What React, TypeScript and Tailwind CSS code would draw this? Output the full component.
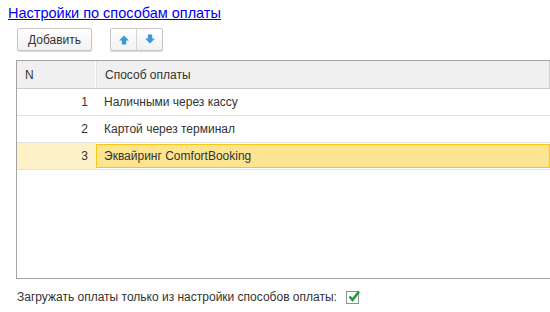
import React from 'react';

const rows = [
  { n: 1, name: 'Наличными через кассу' },
  { n: 2, name: 'Картой через терминал' },
  { n: 3, name: 'Эквайринг ComfortBooking', selected: true },
];

const ArrowUp = () => (
  <svg width="10" height="10" viewBox="0 0 10 10">
    <path d="M5 0.5 L10 5.5 L7.2 5.5 L7.2 9.5 L2.8 9.5 L2.8 5.5 L0 5.5 Z" fill="#3b99d8" />
  </svg>
);

const ArrowDown = () => (
  <svg width="10" height="10" viewBox="0 0 10 10">
    <path d="M5 9.5 L10 4.5 L7.2 4.5 L7.2 0.5 L2.8 0.5 L2.8 4.5 L0 4.5 Z" fill="#3b99d8" />
  </svg>
);

const App = () => {
  return (
    <div className="w-[550px] h-[312px] bg-white overflow-hidden flex flex-col font-['Liberation_Sans',Arial,sans-serif] text-[12px] text-[#333333]">
      {/* Title */}
      <div className="pl-[8px] pt-[5px] leading-[17px]">
        <a href="#" className="text-[14.5px] text-[#0000ee] underline">
          Настройки по способам оплаты
        </a>
      </div>

      {/* Toolbar */}
      <div className="flex items-center pl-[17px] mt-[5px] gap-[18px]">
        <button className="h-[23px] w-[75px] rounded-[2px] border border-[#c6c6c6] bg-gradient-to-b from-white to-[#f1f1f1] shadow-[0_1px_1px_rgba(0,0,0,0.15)] text-[12px] text-[#333333]">
          Добавить
        </button>
        <div className="flex h-[23px] rounded-[2px] border border-[#c6c6c6] bg-gradient-to-b from-white to-[#f1f1f1] shadow-[0_1px_1px_rgba(0,0,0,0.15)]">
          <div className="w-[26px] flex items-center justify-center border-r border-[#d4d4d4]">
            <ArrowUp />
          </div>
          <div className="w-[25px] flex items-center justify-center">
            <div className="-mt-[2px]">
              <ArrowDown />
            </div>
          </div>
        </div>
      </div>

      {/* Table */}
      <div className="ml-[16px] mt-[9px] h-[219px] border-t border-l border-b border-[#a3a3a3] flex flex-col">
        <div className="flex h-[28px] bg-[#f0f0f0] border-b border-[#cccccc] border-r">
          <div className="w-[79px] flex items-center pl-[8px] border-r border-white">N</div>
          <div className="flex-1 flex items-center pl-[8px] border-l border-[#e2e2e2]">Способ оплаты</div>
        </div>
        {rows.map((r) => (
          <div key={r.n} className="flex h-[27px] border-b border-[#e3e3e3]">
            <div
              className={
                r.selected
                  ? 'w-[79px] flex items-center justify-end pr-[8px] bg-[#fdf1c7]'
                  : 'w-[79px] flex items-center justify-end pr-[8px]'
              }
            >
              {r.n}
            </div>
            <div
              className={
                r.selected
                  ? 'flex-1 flex items-center pl-[7px] my-[1px] bg-[#fde490] border border-[#f5c717]'
                  : 'flex-1 flex items-center pl-[8px]'
              }
            >
              {r.name}
            </div>
          </div>
        ))}
      </div>

      {/* Option */}
      <div className="flex items-center pl-[17px] mt-[9px]">
        <span>Загружать оплаты только из настройки способов оплаты:</span>
        <div className="relative ml-[9px] w-[13px] h-[13px] border border-[#8f8f8f] bg-white">
          <svg width="14" height="14" viewBox="0 0 14 14" className="absolute left-[0px] top-[-3px]">
            <path d="M2.5 7.5 L5.5 11 L12 2.5" stroke="#1a9f3c" strokeWidth="2.6" fill="none" />
          </svg>
        </div>
      </div>
    </div>
  );
};

export default App;
